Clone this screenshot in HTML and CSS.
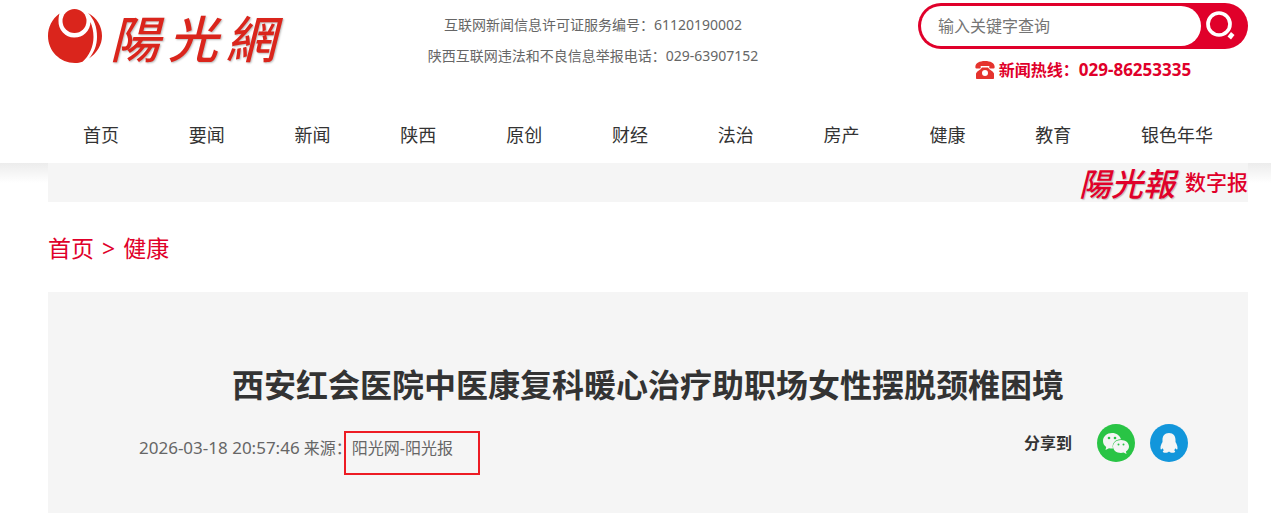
FILE: index.html
```html
<!DOCTYPE html>
<html lang="zh-CN">
<head>
<meta charset="utf-8">
<meta name="viewport" content="width=device-width, initial-scale=1">
<title>西安红会医院中医康复科暖心治疗助职场女性摆脱颈椎困境</title>
<link rel="stylesheet" href="styles.css">
</head>
<body>
<header class="site-header">
  <div class="wrap masthead">
    <a class="logo" href="#" aria-label="陽光網">
      <svg class="logo-mark" viewBox="0 0 54 54" aria-hidden="true">
        <path fill="#da251c" d="M11.500 4.500C4 10 0 18 0 27c0 15 12 27 27 27 3 0 5-.3 7.500-1.200C41 47 45.500 38 45.500 28c0-6-1.200-10.500-3-15A16 16 0 0 1 10.500 12c0-3 .3-5 1-7.500z"/>
        <circle cx="26.500" cy="12" r="12" fill="#da251c"/>
        <path fill="#da251c" d="M40 4c9 5 14 13 14 23 0 9-5 17-13 22.500 5-6 8-13 8-21.500C49 18 46 10 40 4z"/>
      </svg>
      <span class="logo-name" lang="zh-TW"><span>陽</span><span>光</span><span>網</span></span>
    </a>
    <div class="license">
      <p>互联网新闻信息许可证服务编号：61120190002</p>
      <p>陕西互联网违法和不良信息举报电话：029-63907152</p>
    </div>
    <div class="tools">
      <form class="search" role="search">
        <input class="search-input" type="search" aria-label="输入关键字查询" placeholder="输入关键字查询">
        <button class="search-button" type="button" aria-label="搜索">
          <svg viewBox="0 0 30 30" aria-hidden="true">
            <circle cx="14" cy="13" r="11" fill="none" stroke="#fff" stroke-width="3.700"/>
            <path fill="#fff" d="M26 21l3.500 3-3.500 4.500-3.500-3z"/>
          </svg>
        </button>
      </form>
      <p class="hotline">
        <svg class="phone" viewBox="0 0 20 18" aria-hidden="true">
          <path fill="#e5332d" d="M.5 7C-.5 2.500 4 0 10 0s10.500 2.500 9.500 7c-.2.700-5 .7-5.200 0V5H5.700v2c-.2.700-5 .7-5.200 0z"/>
          <path fill="#e5332d" fill-rule="evenodd" d="M7 6.500h6c1.500 2.500 5 3.500 6 6V17c0 .6-.4 1-1 1H2c-.6 0-1-.4-1-1v-4.500c1-2.500 4.500-3.500 6-6zM10 9a3 3 0 1 0 0 6 3 3 0 0 0 0-6z"/>
        </svg>
        <span>新闻热线：<span class="hotline-number">029-86253335</span></span>
      </p>
    </div>
  </div>
  <nav class="wrap">
    <ul class="nav">
      <li><a href="#">首页</a></li>
      <li><a href="#">要闻</a></li>
      <li><a href="#">新闻</a></li>
      <li><a href="#">陕西</a></li>
      <li><a href="#">原创</a></li>
      <li><a href="#">财经</a></li>
      <li><a href="#">法治</a></li>
      <li><a href="#">房产</a></li>
      <li><a href="#">健康</a></li>
      <li><a href="#">教育</a></li>
      <li><a href="#">银色年华</a></li>
    </ul>
  </nav>
</header>
<div class="epaper-band">
  <div class="wrap">
    <div class="epaper">
      <a class="epaper-link" href="#"><span class="epaper-name" lang="zh-TW">陽光報</span><span>数字报</span></a>
    </div>
  </div>
</div>
<main class="wrap">
  <div class="breadcrumb"><a href="#">首页</a><span>&gt;</span><a href="#">健康</a></div>
  <article class="article">
    <h1 class="title">西安红会医院中医康复科暖心治疗助职场女性摆脱颈椎困境</h1>
    <div class="meta">
      <p class="byline"><time class="date">2026-03-18 20:57:46</time> 来源：<span class="source">阳光网-阳光报</span></p>
      <div class="share">
        <span class="share-label">分享到</span>
        <button class="share-button wechat" type="button" aria-label="微信">
          <svg viewBox="0 0 38 38" aria-hidden="true">
            <path fill="#f5f5f5" d="M15 9C10 9 6 12.500 6 17c0 2.500 1.200 4.500 3.200 6L8.500 26l3.500-1.800c1 .3 2 .4 3 .4h1C14.500 19 19 15 24 15.300 23 11.500 19.500 9 15 9z"/>
            <path fill="#f5f5f5" d="M24 16c-4.500 0-8 2.800-8 6.500s3.500 6.500 8 6.500l2.500-.4L29.500 30l-.6-2.500c2-1.200 3.100-3 3.100-5 0-3.700-3.500-6.500-8-6.500z"/>
            <g fill="#29c445"><circle cx="12" cy="14" r="1.300"/><circle cx="18" cy="14" r="1.300"/><circle cx="21.500" cy="20.500" r="1"/><circle cx="26.500" cy="20.500" r="1"/></g>
          </svg>
        </button>
        <button class="share-button qq" type="button" aria-label="QQ">
          <svg viewBox="0 0 38 38" aria-hidden="true">
            <path fill="#f5f5f5" d="M19 9c-4.500 0-6.500 3-6.500 7v2c-1.200 2-2.200 4.300-2 6.500.1 1.500 1 1.200 2-.3l1.300 2.100c-1.800 1.300-1 2.500 1.500 2.500 1.800 0 3-.4 3.700-1.300.7.900 1.900 1.300 3.700 1.300 2.500 0 3.300-1.200 1.500-2.500l1.300-2.100c1 1.500 1.900 1.800 2 .3.200-2.200-.8-4.500-2-6.500v-2c0-4-2-7-6.500-7z"/>
          </svg>
        </button>
      </div>
    </div>
  </article>
</main>
</body>
</html>
```

FILE: styles.css
```css
* {
  box-sizing: border-box;
}

body {
  margin: 0;
  background: #fff;
  color: #333;
  font-family: "Noto Sans", "Noto Sans CJK SC", sans-serif;
  font-size: 16px;
  line-height: 24px;
}

p,
h1,
ul {
  margin: 0;
  padding: 0;
}

a {
  color: inherit;
  text-decoration: none;
}

button {
  border: 0;
  padding: 0;
  cursor: pointer;
}

svg {
  display: block;
}

.wrap {
  max-width: 1271px;
  margin: 0 auto;
  padding: 0 23px 0 48px;
}

.masthead {
  display: grid;
  grid-template-columns: 240px 1fr 330px;
  align-items: start;
  padding-top: 3px;
}

.logo {
  display: flex;
  align-items: center;
  gap: 8px;
  color: #da251c;
}

.logo-mark {
  width: 54px;
  height: 54px;
}

.logo-name {
  display: flex;
  gap: 8px;
  font-family: "Noto Sans CJK TC", sans-serif;
  font-size: 50px;
  font-style: italic;
  font-weight: 500;
  line-height: 66px;
  text-shadow: 1px 1px 2px #bbb;
}

.license {
  padding: 6px 20px 0 0;
  color: #666;
  font-size: 14px;
  line-height: 31px;
  text-align: center;
  white-space: nowrap;
}

.search {
  display: flex;
  height: 46px;
  padding: 3px;
  border-radius: 23px;
  background: #e0002a;
}

.search-input {
  flex: 1;
  min-width: 0;
  padding: 0 17px;
  border: 0;
  border-radius: 20px;
  background: #fff;
  font: inherit;
}

.search-input::placeholder {
  color: #757575;
  opacity: 1;
}

.search-button {
  display: flex;
  align-items: center;
  width: 44px;
  padding-left: 4px;
  background: none;
}

.search-button svg {
  width: 30px;
  height: 30px;
}

.hotline {
  display: flex;
  align-items: center;
  justify-content: center;
  gap: 4px;
  padding-top: 9px;
  color: #e0002a;
  font-weight: 700;
}

.phone {
  width: 20px;
  height: 18px;
}

.hotline-number {
  font-size: 17px;
}

.nav {
  display: flex;
  justify-content: space-around;
  padding: 38px 0 13px;
  font-size: 18px;
  line-height: 30px;
  list-style: none;
}

.epaper-band {
  background: linear-gradient(#ececec, #fff 20px);
}

.epaper {
  display: flex;
  justify-content: flex-end;
  background: #f5f5f5;
}

.epaper-link {
  display: flex;
  align-items: center;
  gap: 10px;
  color: #e0002a;
  font-size: 21px;
  font-weight: 500;
  line-height: 39px;
}

.epaper-name {
  font-family: "Noto Sans CJK TC", sans-serif;
  font-size: 32px;
  font-style: italic;
  text-shadow: 1px 1px 1px #bbb;
}

.breadcrumb {
  display: flex;
  gap: 8px;
  padding: 26px 0 24px;
  color: #e0002a;
  font-size: 23px;
  line-height: 40px;
}

.article {
  padding: 68px 60px 51px 91px;
  background: #f5f5f5;
}

.title {
  padding-right: 31px;
  font-size: 32px;
  font-weight: 700;
  line-height: 50px;
  text-align: center;
}

.meta {
  display: flex;
  align-items: flex-start;
  justify-content: space-between;
  padding-top: 14px;
}

.byline {
  padding-top: 12px;
  color: #666;
}

.date {
  font-size: 17px;
}

.source {
  position: relative;
}

/* Marked area around the source name */
.source::after {
  position: absolute;
  inset: -6px -27px -16px -8px;
  border: 2px solid #ed1c24;
  content: "";
}

.share {
  display: flex;
  align-items: center;
  gap: 15px;
}

.share-label {
  padding-right: 10px;
  font-weight: 700;
}

.share-button {
  width: 38px;
  height: 38px;
  border-radius: 50%;
}

.wechat {
  background: #29c445;
}

.qq {
  background: #1296db;
}
```
